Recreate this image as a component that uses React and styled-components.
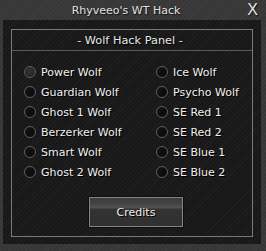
import styled, { createGlobalStyle } from "styled-components";

const GlobalStyle = createGlobalStyle`
    html, body {
        margin: 0;
        padding: 0;
        background: #3a3a3a;
    }
    * {
        box-sizing: border-box;
    }
`

const Window = styled.div`
    width: 266px;
    height: 251px;
    display: flex;
    flex-direction: column;
    background: repeating-linear-gradient(135deg, #3d3d3d 0 1px, #373737 1px 3px);
    font-family: "DejaVu Sans", Verdana, sans-serif;
    color: #e6e6e6;
    overflow: hidden;
`
const TitleBar = styled.div`
    height: 20px;
    display: grid;
    grid-template-columns: 1fr auto 1fr;
    align-items: center;
    padding: 0 8px 0 0;
`
const Title = styled.div`
    grid-column: 2;
    font-size: 11px;
    color: #e0e0e0;
    text-shadow: 1px 1px 1px #111;
    margin-right: 6px;
`
const Close = styled.div`
    grid-column: 3;
    justify-self: end;
    font-family: "Liberation Sans", Arial, sans-serif;
    font-size: 16px;
    line-height: 16px;
    color: #e6e6e6;
    text-shadow: 1px 1px 1px #111;
    cursor: pointer;
`
const Panel = styled.div`
    flex: 1;
    margin: 0 5px 7px 3px;
    padding: 9px 8px 7px 8px;
    display: flex;
    background: repeating-linear-gradient(135deg, #1f1f1f 0 1px, #181818 1px 3px);
`
const Box = styled.div`
    flex: 1;
    display: flex;
    flex-direction: column;
    border: 1px solid #7a7a7a;
`
const BoxHeader = styled.div`
    height: 21px;
    display: flex;
    align-items: center;
    justify-content: center;
    border-bottom: 1px solid #5a5a5a;
    font-size: 11.3px;
    color: #e8e8e8;
    text-shadow: 1px 1px 1px #000;
    padding-right: 4px;
`
const Options = styled.div`
    display: grid;
    grid-template-columns: 132px 1fr;
    grid-auto-flow: column;
    grid-template-rows: repeat(6, 20px);
    padding: 11px 0 0 12px;
`
const Option = styled.label`
    display: flex;
    align-items: center;
    gap: 5px;
    font-size: 11px;
    color: #f0f0f0;
    text-shadow: 1px 1px 0 #000;
    cursor: pointer;
`
const Radio = styled.span`
    width: 12px;
    height: 12px;
    border-radius: 50%;
    border: 1px solid #5e5e5e;
    background: ${p => p.$light
        ? "radial-gradient(circle at 50% 40%, #333 0, #262626 70%)"
        : "repeating-linear-gradient(135deg, #141414 0 1px, #0a0a0a 1px 2px)"};
    flex-shrink: 0;
`
const Credits = styled.button`
    margin: 14px 0 0 76px;
    width: 96px;
    height: 32px;
    border: 1px solid #0d0d0d;
    padding: 0;
    background: none;
    display: flex;
    cursor: pointer;
`
const CreditsFace = styled.span`
    flex: 1;
    display: flex;
    align-items: center;
    justify-content: center;
    border: 1px solid #858585;
    background: linear-gradient(to bottom, #3c3c3c 0, #454545 6px, #525252 10px, #333 11px, #303030 100%);
    font-family: "DejaVu Sans", Verdana, sans-serif;
    font-size: 11px;
    color: #f0f0f0;
    text-shadow: 1px 1px 0 #000;
    padding-top: 1px;
`

const options = [
    "Power Wolf", "Guardian Wolf", "Ghost 1 Wolf", "Berzerker Wolf", "Smart Wolf", "Ghost 2 Wolf",
    "Ice Wolf", "Psycho Wolf", "SE Red 1", "SE Red 2", "SE Blue 1", "SE Blue 2",
]

const App = () => {
    return(
        <>
            <GlobalStyle />
            <Window>
                <TitleBar>
                    <Title>Rhyveeo's WT Hack</Title>
                    <Close>X</Close>
                </TitleBar>
                <Panel>
                    <Box>
                        <BoxHeader>- Wolf Hack Panel -</BoxHeader>
                        <Options>
                            {options.map((name, i) => (
                                <Option key={name}>
                                    <Radio $light={i === 0} />
                                    {name}
                                </Option>
                            ))}
                        </Options>
                        <Credits><CreditsFace>Credits</CreditsFace></Credits>
                    </Box>
                </Panel>
            </Window>
        </>
    )
};

export default App;
